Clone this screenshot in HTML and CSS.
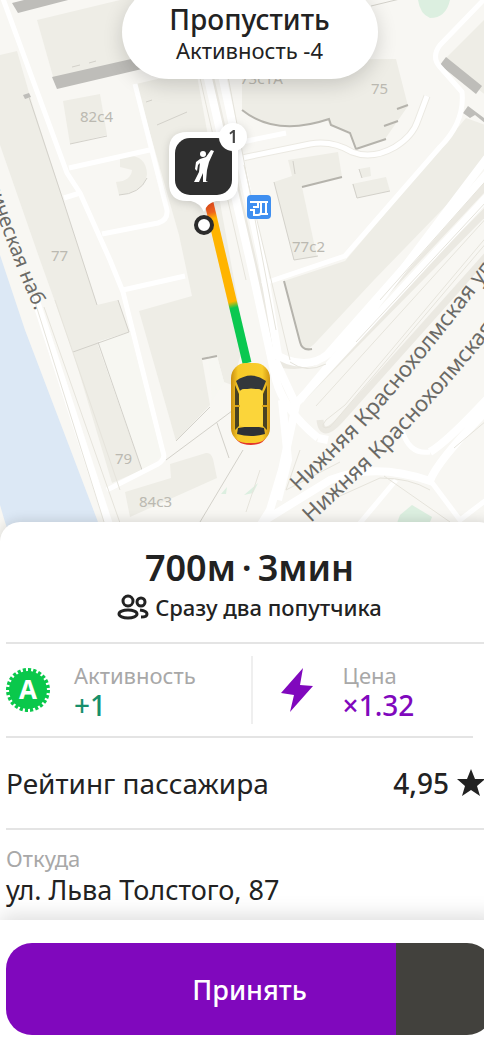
FILE: index.html
```html
<!DOCTYPE html>
<html lang="ru">
<head>
  <meta charset="UTF-8">
  <meta name="viewport" content="width=device-width, initial-scale=1.0">
  <title>Новый заказ</title>
  <link rel="stylesheet" href="styles.css">
</head>
<body>
  <main class="screen">
    <section class="map">
      <svg class="map-canvas" viewBox="0 0 499 542" preserveAspectRatio="xMinYMin slice" role="img" aria-label="Карта">
        <defs>
          <path id="street-1" d="M299 492 L365 427 Q420 365 474 294 L540 208" />
          <path id="street-2" d="M311 523 L379 459 Q435 402 484 342 L540 270" />
          <path id="quay" d="M-36 112 Q-4 222 35 311" />
          <linearGradient id="route" gradientUnits="userSpaceOnUse" x1="208" y1="203" x2="247" y2="362">
            <stop offset="0" stop-color="#f0501e" />
            <stop offset=".06" stop-color="#f0641e" />
            <stop offset=".1" stop-color="#ffb400" />
            <stop offset=".62" stop-color="#ffb400" />
            <stop offset=".66" stop-color="#0ac850" />
            <stop offset="1" stop-color="#0ac850" />
          </linearGradient>
          <linearGradient id="car-body">
            <stop offset="0" stop-color="#c98e10" />
            <stop offset=".18" stop-color="#f7c928" />
            <stop offset=".8" stop-color="#f9cd2c" />
            <stop offset="1" stop-color="#cf9412" />
          </linearGradient>
        </defs>

        <!-- вода -->
        <path class="water" d="M0 255 L25 330 L98 522 L106 542 L12 542 L5 522 L0 505Z" />

        <!-- дома -->
        <g class="building">
          <path d="M0 55 L17 51 L32 103 L63 200 L97 305 L118 300 L129 332 L97 342 L142 470 L112 483 L73 352 L40 260 L0 145Z" />
          <path d="M37 20 L120 0 L134 0 L140 60 L54 80Z" />
          <path d="M63 101 L100 94 L107 135 L70 144Z" />
          <path d="M120 156 Q146 152 147 174 Q145 192 119 195 L116 182 Q131 181 132 170 L120 167Z" />
          <path d="M136 84 L196 70 L245 340 L232 385 L224 382 L217 356 L202 359 L210 405 L176 441 L139 311 L192 296 L179 235Z" />
          <path d="M170 464 L206 453 Q211 452 213 459 L217 478 L130 517 L125 492 L171 478Z" />
          <path d="M242 60 L396 59 L408 106 L385 139 L356 149 L350 132 L330 126 L327 119 Q276 137 242 110Z" />
          <path d="M274 182 L292 176 L288 160 L338 152 L342 177 L302 187 L317 257 L294 260Z" />
          <path d="M352 184 L386 177 L390 191 L357 198Z M359 169 L370 167 L371 176 L361 178Z" />
          <path d="M442 62 L499 5 L499 105Z M466 118 L499 130 L499 151 L374 280 L318 340 Q306 354 301 346 L284 281 L345 261Z" />
        </g>
        <path class="block" d="M97 342 L129 332 L163 454 L142 470Z M208 356 L217 356 L224 382 L212 400Z" />
        <g class="green">
          <path d="M418 0 L450 0 Q446 18 430 18 Q420 14 418 0Z" />
          <path d="M400 515 L412 505 L432 517 L422 542 L390 542Z" />
          <path d="M221 494 l6 -7 l-1 7z M244 495 l14 -12 l-5 10z" />
        </g>

        <!-- тёмные фасады -->
        <g class="facade">
          <path d="M12 3 L28 -1 L72 -1 L18 13Z" />
          <path d="M52 77 L140 57 L142 69 L57 89Z" />
          <path d="M446 57 L482 86 L476 94 L440 65Z" />
          <path d="M468 106 L484 118 L499 128 L499 134 L475 115 L470 118 L463 113Z" />
          <path d="M23 95 l6 -2 l2 4 l-6 2z" />
        </g>
        <g class="facade-line">
          <path d="M242 110 Q276 137 329 119 L331 125 L350 133 L356 149 L386 139 M384 126 L398 121 M397 109 L408 105" />
          <path d="M302 187 L342 177 M284 281 L300 342 Q302 351 312 349 M202 359 L217 356" />
        </g>
        <g class="edge">
          <path d="M70 144 L107 136 M119 195 Q140 194 147 178 M72 67 L80 65 M89 63 L96 61 M146 102 L152 100 M157 125 L187 112" />
          <path d="M29 97 L63 200 L97 305 M118 300 L129 332 L73 352 M98 342 L142 470 M176 441 L210 407" />
          <path d="M274 182 L294 260 L318 256 M293 161 L295 174 M353 184 L357 198 L390 191 M359 169 L362 178" />
          <path d="M371 6 L404 -2 M166 460 L240 405 M217 423 L229 458 M200 522 L243 450" />
        </g>

        <!-- проезды -->
        <g class="lane-case">
          <path d="M210 75 L255 270 L276 355" />
          <path d="M270 362 Q306 372 328 354 L499 172" />
          <path d="M290 410 L499 198" />
          <path d="M320 420 Q322 440 340 420 L499 242" />
          <path d="M242 158 L310 144 Q332 140 352 152 Q372 160 395 147 Q413 136 418 120 L427 96" />
        </g>
        <g class="lane">
          <path d="M2 -4 L67 173 L80 193 L110 260 L123 292 L163 452 Q166 459 158 464 L107 490" />
          <path d="M135 84 L167 210 Q168 220 158 223 L102 234 M69 168 L154 149 M64 198 L80 193 M123 290 L185 276" />
          <path d="M242 158 L310 144 Q332 140 352 152 Q372 160 395 147 Q413 136 418 120 L427 96" />
          <path d="M499 -16 L440 45 Q431 57 440 67 L462 92 Q465 122 440 147 L345 256 L262 284" />
          <path d="M242 142 L286 133" />
          <path d="M430 480 L460 520 L499 490 M396 480 L350 535 M402 430 Q409 455 430 452" />
        </g>
        <g class="avenue">
          <path d="M34 295 L114 540" />
          <path d="M206 70 L251 265 L276 380 Q284 410 318 438" />
          <path d="M220 66 L262 260 Q269 300 278 355" />
          <path d="M268 350 Q304 374 328 354 L499 160" />
          <path d="M292 408 L499 184 M300 400 L345 346 L499 142" />
          <path d="M275 360 L296 405 L282 470 L270 510 L250 542" />
          <path d="M282 400 L288 460 L278 500 M318 438 L328 440" />
          <path d="M262 522 L330 480 Q375 462 430 481 Q437 460 499 398 M430 452 Q450 440 499 386" />
        </g>
        <g class="markup">
          <path d="M25 270 L104 522 M44 307 L126 540 M55 300 L120 490" />
          <path d="M226 66 L276 330 M244 165 L290 360 M200 78 L246 280" />
          <path d="M345 405 L326 420 Q318 430 330 427 L499 228 M345 405 L499 222 M316 406 L499 204 M356 342 L499 188 M380 300 L499 166" />
          <path d="M340 496 L380 478 Q410 478 430 490 M384 476 L450 522 M454 448 L499 410" />
          <path d="M290 362 Q306 374 326 364 M260 470 L246 512 M300 450 L286 490 L340 462" />
        </g>

        <!-- номера домов -->
        <g class="house">
          <text x="80" y="122">82с4</text>
          <text x="371" y="94">75</text>
          <text x="240" y="84">73с1А</text>
          <text x="51" y="261">77</text>
          <text x="292" y="252">77с2</text>
          <text x="115" y="464">79</text>
          <text x="139" y="507">84с3</text>
        </g>

        <!-- улицы -->
        <g class="street">
          <text><textPath href="#street-1">Нижняя Краснохолмская ул.</textPath></text>
          <text><textPath href="#street-2">Нижняя Краснохолмская</textPath></text>
          <text class="street-quay"><textPath href="#quay" startOffset="100%">ническая наб.</textPath></text>
        </g>

        <!-- остановка -->
        <g>
          <rect x="247" y="195" width="24" height="24" rx="4" fill="#3f8ff0" />
          <path d="M250 202h8v5h-5M250 210h4v5h4M259 202h9M261 203v9q0 3 -3 3M266 203v11M261 214h7" fill="none" stroke="#fff" stroke-width="2" />
        </g>

        <!-- маршрут -->
        <path d="M209 203 L247 363" fill="none" stroke="url(#route)" stroke-width="9" />

        <!-- машина -->
        <g>
          <path d="M233 430 Q234 445 251 445 Q267 445 268 430Z" fill="#e3372b" />
          <rect x="231" y="363" width="39" height="80" rx="15" fill="url(#car-body)" />
          <path d="M236 381 Q251 370 266 381 L262 391 Q251 386 240 391Z" fill="#33373b" />
          <path d="M235 385 L239 394 V426 L235 430Z M267 385 L263 394 V426 L267 430Z" fill="#4a4222" />
          <path d="M238 428 Q251 425 264 428 L265 434 Q251 438 237 434Z" fill="#2d3135" />
          <rect x="239" y="389" width="24" height="38" rx="5" fill="#fbd53a" />
          <path d="M235 406h5M262 406h5" stroke="#d9a51c" stroke-width="2" />
        </g>

        <!-- пассажир -->
        <g class="pin">
          <path d="M187 132 H220 Q238 132 238 150 V183 Q238 201 220 201 H216 Q207 203 204 212 Q200 203 191 201 H187 Q169 201 169 183 V150 Q169 132 187 132Z" fill="#fff" />
          <rect x="175" y="138" width="57" height="57" rx="15" fill="#2f2f2f" />
          <circle cx="203" cy="154" r="3" fill="#fff" />
          <path d="M200 159 L206 157 L211 150 L214 151 L209 162 L207 170 L206 181 L208 182 L203 182 L203 173 L199 182 L194 182 L199 172 L200 163 L198 165 L197 171 L195 169 L196 162Z" fill="#fff" />
          <circle cx="233" cy="137" r="14" fill="#fff" />
          <text class="pin-count" x="233" y="143">1</text>
        </g>
        <circle cx="204" cy="225" r="8" fill="#fff" stroke="#2b2b2b" stroke-width="4" />
      </svg>

      <button class="skip" type="button">
        <span class="skip-title">Пропустить</span>
        <span class="skip-note">Активность -4</span>
      </button>
    </section>

    <section class="sheet">
      <header class="summary">
        <h1>700м&thinsp;·&thinsp;3мин</h1>
        <p>
          <svg class="icon-people" viewBox="0 0 32 26" aria-hidden="true">
            <ellipse cx="11" cy="7" rx="5" ry="5" />
            <ellipse cx="11" cy="20" rx="9" ry="4" />
            <ellipse cx="24" cy="8" rx="4" ry="4" />
            <path d="M23 16 Q30 17 30 20 Q30 23 24 23" />
          </svg>
          Сразу два попутчика
        </p>
      </header>

      <div class="stats">
        <div class="stat">
          <svg class="icon-activity" viewBox="0 0 44 44" aria-hidden="true">
            <circle cx="22" cy="22" r="19" fill="#0ac84b" />
            <circle cx="22" cy="22" r="20" fill="none" stroke="#0ac84b" stroke-width="4" stroke-dasharray="3 2" pathLength="120" />
            <text x="22" y="31">A</text>
          </svg>
          <dl>
            <dt>Активность</dt>
            <dd class="plus">+1</dd>
          </dl>
        </div>
        <div class="stat stat-price">
          <svg class="icon-bolt" viewBox="0 0 32 44" aria-hidden="true">
            <path d="M22 0 L0 25 L13 27 L9 44 L32 18 L19 17Z" fill="#8008bd" />
          </svg>
          <dl>
            <dt>Цена</dt>
            <dd class="price">×1.32</dd>
          </dl>
        </div>
      </div>

      <div class="rating">
        <span>Рейтинг пассажира</span>
        <span class="rating-value">
          4,95
          <svg class="icon-star" viewBox="0 0 28 28" aria-hidden="true">
            <path d="M14 0 L18 10 L28 10 L20 17 L23 27 L14 21 L5 27 L8 17 L0 10 L10 10Z" fill="#222" />
          </svg>
        </span>
      </div>

      <div class="address">
        <span class="address-label">Откуда</span>
        <span>ул. Льва Толстого, 87</span>
      </div>

      <footer class="actions">
        <button class="accept" type="button">Принять</button>
      </footer>
    </section>
  </main>
</body>
</html>
```
FILE: styles.css
```css
* {
  box-sizing: border-box;
  margin: 0;
}

body {
  overflow-x: hidden;
  background: #fff;
  color: #222;
  font-family: "Noto Sans", sans-serif;
  font-size: 27px;
}

button {
  border: 0;
  font: inherit;
  cursor: pointer;
}

/* экран чуть шире окна, правый край уходит за границу */
.screen {
  --gap: 6px;
  --purple: #8008bd;
  --line: #e4e4e4;

  display: flex;
  flex-direction: column;
  width: calc(100% + 15px);
  min-height: 100vh;
}

/* Карта */
.map {
  position: relative;
  flex: 1 0 320px;
  overflow: hidden;
  background: #f8f7f3;
}
.map-canvas {
  position: absolute;
  width: 100%;
  height: 100%;
}
.water {fill: #dce8f5;}
.building {fill: #eeede6;}
.block {fill: #f7f7f2;}
.green {fill: #dcefe0;}
.facade {fill: #bebdb9;}
.facade-line {
  fill: none;
  stroke: #b5b3ac;
  stroke-width: 2;
}
.edge {
  fill: none;
  stroke: #d3d1ca;
}
.lane-case {
  fill: none;
  stroke: #ebe9e2;
  stroke-width: 7;
}
.lane {
  fill: none;
  stroke: #fff;
  stroke-width: 5;
  stroke-linejoin: round;
}
.avenue {
  fill: none;
  stroke: #fff;
  stroke-width: 8;
}
.markup {
  fill: none;
  stroke: #e6e4dc;
}
.house {
  fill: #bbb9b1;
  font-size: 15px;
}
.street {
  fill: #6b6a66;
  font-size: 22px;
}
.street-quay {
  font-size: 20px;
  text-anchor: end;
}
.pin {filter: drop-shadow(0 2px 4px rgba(0, 0, 0, .15));}
.pin-count {
  fill: #444;
  font-size: 17px;
  font-weight: 600;
  text-anchor: middle;
}

/* Кнопка пропуска поверх карты */
.skip {
  position: absolute;
  top: -15px;
  left: 50%;
  display: flex;
  flex-direction: column;
  align-items: center;
  width: 256px;
  padding: 18px 0 14px;
  border-radius: 47px;
  background: #fff;
  box-shadow: 0 6px 20px rgba(0, 0, 0, .16);
  color: #222;
  transform: translateX(-50%);
}
.skip-title {
  font-size: 28px;
  font-weight: 500;
  line-height: 32px;
}
.skip-note {
  font-size: 22px;
  line-height: 30px;
}

/* Карточка заказа */
.sheet {
  position: relative;
  margin-top: -20px;
  border-radius: 20px 20px 0 0;
  background: #fff;
  box-shadow: 0 -2px 12px rgba(0, 0, 0, .12);
}

.summary {
  margin-left: var(--gap);
  padding: 24px var(--gap) 18px 0;
  border-bottom: 2px solid var(--line);
  text-align: center;
}
.summary h1 {
  font-size: 36px;
  font-weight: 600;
  line-height: 44px;
}
.summary p {
  display: flex;
  justify-content: center;
  align-items: center;
  gap: 6px;
  font-size: 22px;
  font-weight: 500;
  line-height: 34px;
}
.icon-people {
  width: 32px;
  height: 26px;
  fill: none;
  stroke: #222;
  stroke-width: 3;
}

.stats {
  display: grid;
  grid-template-columns: 11fr 10fr;
  margin: 0 26px 0 var(--gap);
  padding: 12px 0;
  border-bottom: 2px solid var(--line);
}
.stat {
  display: flex;
  align-items: center;
  gap: 24px;
  height: 68px;
}
.stat-price {
  gap: 30px;
  padding-left: 28px;
  border-left: 2px solid #efefef;
}
.stat dl {line-height: 30px;}
.stat dt {
  color: #a8a8a8;
  font-size: 22px;
}
.stat dd {
  font-size: 28px;
  font-weight: 500;
}
.plus {color: #178f6b;}
.price {color: var(--purple);}
.icon-activity {
  width: 44px;
  height: 44px;
}
.icon-activity text {
  fill: #fff;
  font-size: 26px;
  font-weight: 700;
  text-anchor: middle;
}
.icon-bolt {
  width: 32px;
  height: 44px;
}

.rating {
  display: flex;
  justify-content: space-between;
  align-items: center;
  height: 92px;
  margin-left: var(--gap);
  padding-right: 14px;
  border-bottom: 2px solid var(--line);
  font-size: 28px;
}
.rating-value {
  display: flex;
  align-items: center;
  gap: 8px;
  font-weight: 500;
}
.icon-star {
  width: 28px;
  height: 28px;
}

.address {
  display: flex;
  flex-direction: column;
  padding: 14px var(--gap) 12px;
  line-height: 36px;
}
.address-label {
  color: #a8a8a8;
  font-size: 22px;
  line-height: 28px;
}

.actions {
  position: relative;
  padding: 23px var(--gap) 3px;
  background: #fff;
  box-shadow: 0 -4px 20px rgba(0, 0, 0, .14);
}
.accept {
  width: 100%;
  height: 92px;
  border-radius: 26px;
  background: linear-gradient(to right, var(--purple) 80%, #42413d 80%);
  color: #fff;
  font-weight: 500;
}
```
